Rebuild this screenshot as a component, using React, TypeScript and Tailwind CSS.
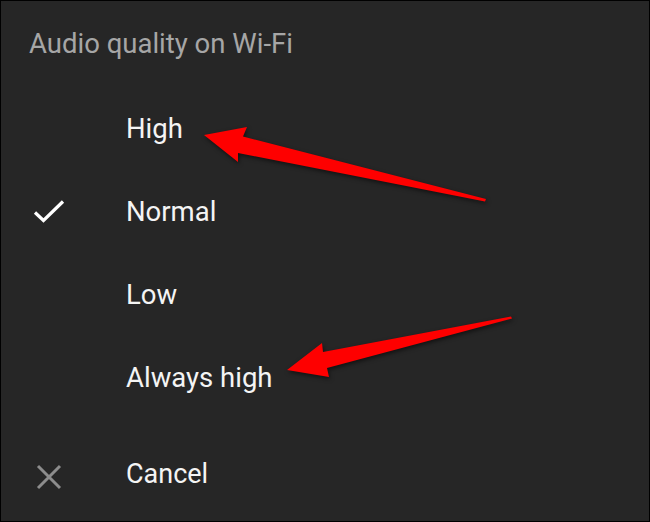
import React from "react";

const Check = () => (
  <svg width="40" height="30" viewBox="0 0 40 30" className="block">
    <polyline points="3,15.5 11.5,23.5 31,4.5" fill="none" stroke="#ffffff" strokeWidth="3.2" strokeLinecap="butt" strokeLinejoin="miter" />
  </svg>
);

const Cross = () => (
  <svg width="30" height="30" viewBox="0 0 30 30" className="block">
    <path d="M4 4 L26 26 M26 4 L4 26" fill="none" stroke="#8c8c8c" strokeWidth="3" />
  </svg>
);

function Row({ label, icon }: { label: string; icon?: React.ReactNode }) {
  return (
    <div className="h-[83px] flex items-center">
      <div className="w-[125px] h-full flex items-center pl-[31px] shrink-0">{icon}</div>
      <span className="text-[27.5px] text-[#f4f4f4]">{label}</span>
    </div>
  );
}

export default function App() {
  return (
    <div
      className="relative w-[650px] h-[522px] border border-black bg-[#262626] box-border overflow-hidden"
      style={{ fontFamily: "Roboto, 'Noto Sans', sans-serif" }}
    >
      <div className="h-[86px] flex items-center pl-[28px]">
        <span className="text-[27.5px] text-[#a6a6a6]">Audio quality on Wi-Fi</span>
      </div>
      <Row label="High" />
      <Row label="Normal" icon={<Check />} />
      <Row label="Low" />
      <Row label="Always high" />
      <div className="mt-[14px]">
        <div className="h-[83px] flex items-center">
          <div className="w-[125px] h-full flex items-center pl-[33px] pt-[4px] shrink-0">
            <Cross />
          </div>
          <span className="text-[27px] text-[#f4f4f4]">Cancel</span>
        </div>
      </div>

      <svg
        className="absolute left-[-1px] top-[-1px] pointer-events-none"
        width="650"
        height="522"
        viewBox="0 0 650 522"
        style={{ filter: "drop-shadow(1px 2px 2px rgba(0,0,0,0.55))" }}
      >
        <polygon
          points="204,135 247,127 243,136.5 486,199 485,201.5 238,153 238,162"
          fill="#fe0000"
        />
        <polygon
          points="287,370 322,343 323,352 511,316.5 512,318.5 327,368 329,377"
          fill="#fe0000"
        />
      </svg>
    </div>
  );
}
